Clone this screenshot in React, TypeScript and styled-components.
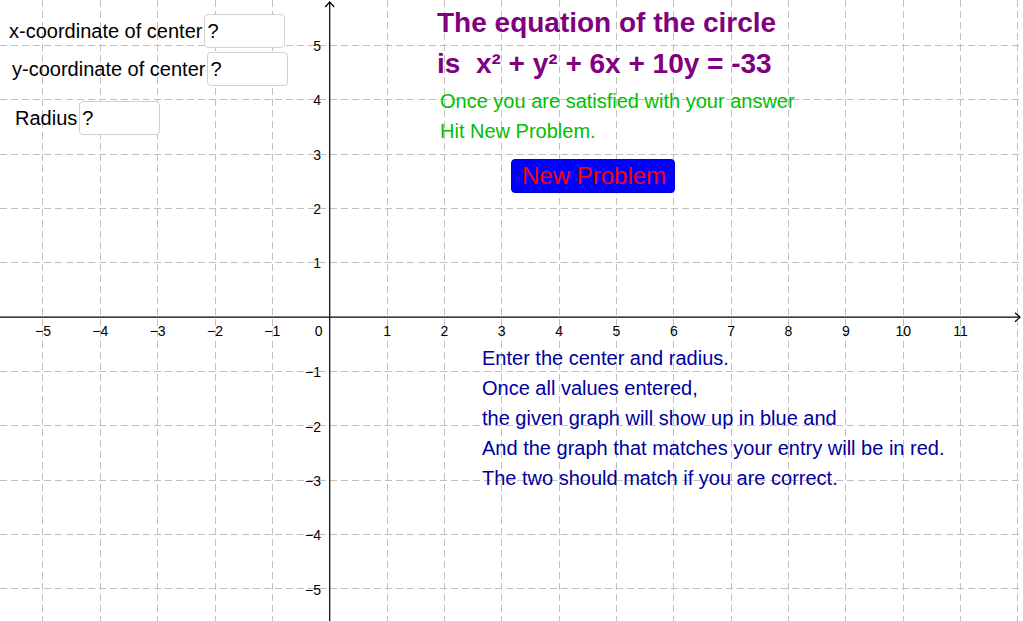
import React from 'react';
import styled, { createGlobalStyle } from 'styled-components';

const ORIGIN_X = 329.7;
const ORIGIN_Y = 317.2;
const STEP_X = 57.35;
const STEP_Y = 54.35;
const WIDTH = 1023;
const HEIGHT = 621;

const GlobalStyle = createGlobalStyle`
  html, body {
    margin: 0;
    padding: 0;
    background: #ffffff;
    overflow: hidden;
  }
  body {
    font-family: "Liberation Sans", Arial, sans-serif;
  }
`;

const Canvas = styled.div`
  position: relative;
  width: ${WIDTH}px;
  height: ${HEIGHT}px;
  background: #ffffff;
  font-family: "Liberation Sans", Arial, sans-serif;
  overflow: hidden;
`;

const GraphLayer = styled.svg`
  position: absolute;
  inset: 0;
  display: block;
`;

const Widget = styled.div<{ $x: number; $y: number }>`
  position: absolute;
  left: ${(p) => p.$x}px;
  top: ${(p) => p.$y}px;
`;

const InputRow = styled.label`
  display: flex;
  align-items: center;
  gap: 2px;
  font-size: 20px;
  color: #000000;
  white-space: nowrap;
`;

const InputBox = styled.div`
  box-sizing: border-box;
  width: 81px;
  height: 34px;
  border: 1px solid #d2d2d2;
  border-radius: 4px;
  background: #ffffff;
  display: flex;
  align-items: center;
  padding-left: 2px;
  font-size: 20px;
  color: #000000;
`;

const TextBlock = styled.div<{ $color: string; $size: number; $bold?: boolean; $lead: number }>`
  display: flex;
  flex-direction: column;
  color: ${(p) => p.$color};
  font-size: ${(p) => p.$size}px;
  font-weight: ${(p) => (p.$bold ? 700 : 400)};
  line-height: ${(p) => p.$lead}px;
  white-space: pre;
`;

const ProblemButton = styled.button`
  box-sizing: border-box;
  width: 164px;
  height: 34px;
  margin: 0;
  padding: 0 0 0 10px;
  text-align: left;
  background: #0000ff;
  border: 1px solid #0000d0;
  border-radius: 4px;
  color: #ff0000;
  font-family: "Liberation Sans", Arial, sans-serif;
  font-size: 24px;
  line-height: 32px;
  cursor: pointer;
`;

const xs = Array.from({ length: 18 }, (_, i) => i - 5); // -5..12
const ys = Array.from({ length: 11 }, (_, i) => i - 5); // -5..5

const minus = (n: number) => (n < 0 ? `\u2212${Math.abs(n)}` : `${n}`);

const Graph = () => (
  <GraphLayer width={WIDTH} height={HEIGHT} viewBox={`0 0 ${WIDTH} ${HEIGHT}`}>
    <g stroke="#c0c0c0" strokeWidth={1} strokeDasharray="7 4" shapeRendering="crispEdges">
      {xs.map((k) =>
        k === 0 ? null : (
          <line key={`vx${k}`} x1={ORIGIN_X + k * STEP_X} y1={0} x2={ORIGIN_X + k * STEP_X} y2={HEIGHT} />
        )
      )}
      {ys.map((k) =>
        k === 0 ? null : (
          <line key={`hy${k}`} x1={0} y1={ORIGIN_Y - k * STEP_Y} x2={WIDTH} y2={ORIGIN_Y - k * STEP_Y} />
        )
      )}
    </g>
    <g stroke="#000000" strokeWidth={1.2} fill="none">
      <line x1={0} y1={ORIGIN_Y} x2={1020} y2={ORIGIN_Y} />
      <line x1={ORIGIN_X} y1={2} x2={ORIGIN_X} y2={HEIGHT} />
      <polyline points={`1015,${ORIGIN_Y - 4.5} 1020,${ORIGIN_Y} 1015,${ORIGIN_Y + 4.5}`} />
      <polyline points={`${ORIGIN_X - 4.5},7 ${ORIGIN_X},2 ${ORIGIN_X + 4.5},7`} />
    </g>
    <g fill="#000000" fontFamily='"Liberation Sans", Arial, sans-serif' fontSize={14}>
      {xs
        .filter((k) => k !== 0 && k <= 11)
        .map((k) => (
          <text key={`lx${k}`} x={ORIGIN_X + k * STEP_X} y={336} textAnchor="middle">
            {minus(k)}
          </text>
        ))}
      <text x={322.5} y={336} textAnchor="end">
        0
      </text>
      {ys
        .filter((k) => k !== 0)
        .map((k) => (
          <text key={`ly${k}`} x={321} y={ORIGIN_Y - k * STEP_Y + 5.6} textAnchor="end">
            {minus(k)}
          </text>
        ))}
    </g>
  </GraphLayer>
);

export default function App() {
  return (
    <>
      <GlobalStyle />
      <Canvas>
        <Graph />

        <Widget $x={9} $y={14}>
          <InputRow>
            x-coordinate of center
            <InputBox>?</InputBox>
          </InputRow>
        </Widget>
        <Widget $x={12} $y={52}>
          <InputRow>
            y-coordinate of center
            <InputBox>?</InputBox>
          </InputRow>
        </Widget>
        <Widget $x={15} $y={101}>
          <InputRow>
            Radius
            <InputBox>?</InputBox>
          </InputRow>
        </Widget>

        <Widget $x={437} $y={2}>
          <TextBlock $color="#800080" $size={28} $bold $lead={41}>
            <span>The equation of the circle</span>
            <span>is  x² + y² + 6x + 10y = -33</span>
          </TextBlock>
        </Widget>

        <Widget $x={440} $y={86}>
          <TextBlock $color="#00c000" $size={20} $lead={30}>
            <span>Once you are satisfied with your answer</span>
            <span>Hit New Problem.</span>
          </TextBlock>
        </Widget>

        <Widget $x={511} $y={159}>
          <ProblemButton>New Problem</ProblemButton>
        </Widget>

        <Widget $x={482} $y={343}>
          <TextBlock $color="#0000a0" $size={20} $lead={30}>
            <span>Enter the center and radius.</span>
            <span>Once all values entered,</span>
            <span>the given graph will show up in blue and</span>
            <span>And the graph that matches your entry will be in red.</span>
            <span>The two should match if you are correct.</span>
          </TextBlock>
        </Widget>
      </Canvas>
    </>
  );
}
